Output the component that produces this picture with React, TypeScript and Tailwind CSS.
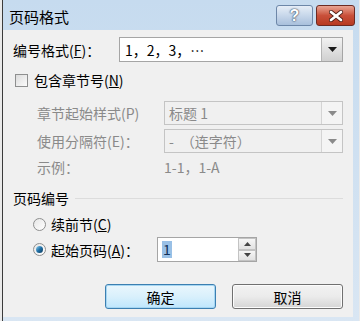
import React from 'react';

const FONT = "font-['Noto_Sans_CJK_SC','Noto_Sans',sans-serif]";

function DropArrow({ disabled }: { disabled?: boolean }) {
  return (
    <svg width="9" height="5" viewBox="0 0 9 5">
      <path d="M0 0 L9 0 L4.5 5 Z" fill={disabled ? '#8a8a8a' : '#1a1a1a'} />
    </svg>
  );
}

function Combo({ value, disabled }: { value: string; disabled?: boolean }) {
  return (
    <div
      className={`flex h-[24px] flex-1 items-stretch border ${
        disabled ? 'border-[#c4c4c4] bg-[#f0f0f0] text-[#8a8a8a]' : 'border-[#a5a5a5] bg-white text-black'
      }`}
    >
      <div className="flex flex-1 items-center pl-[4px]">{value}</div>
      <div
        className={`flex w-[21px] items-center justify-center border-l ${
          disabled ? 'border-[#d4d4d4] bg-[#f4f4f4]' : 'border-[#b5b5b5] bg-gradient-to-b from-[#f2f2f2] to-[#d6d6d6]'
        }`}
      >
        <DropArrow disabled={disabled} />
      </div>
    </div>
  );
}

function Radio({ checked }: { checked?: boolean }) {
  return (
    <div className="flex h-[13px] w-[13px] items-center justify-center rounded-full border border-[#8e8f8f] bg-gradient-to-br from-[#e6e6e6] to-[#ffffff]">
      {checked && (
        <div className="h-[7px] w-[7px] rounded-full bg-gradient-to-br from-[#8ad4f5] via-[#1f6fa5] to-[#0d3a5c]" />
      )}
    </div>
  );
}

export default function App() {
  return (
    <div className={`h-[321px] w-[360px] bg-[#eaeaea] ${FONT}`}>
      <div className="ml-[2px] flex h-[321px] w-[357px] flex-col border-l border-[#3b3b3b] bg-gradient-to-b from-[#c6dbef] to-[#d9e6f3]">
        {/* Title bar */}
        <div className="flex h-[30px] items-start">
          <div className="ml-[6px] mt-[6px] text-[15px] leading-[22px] text-black">页码格式</div>
          <div className="ml-auto mt-[5px] flex gap-[3px] pr-[4px]">
            <div className="flex h-[21px] w-[37px] items-center justify-center rounded-[3px] border border-[#6d87a8] bg-gradient-to-b from-[#e6eef7] via-[#c7d7ea] to-[#a9c0dc]">
              <span className="font-['Liberation_Sans',sans-serif] text-[16px] font-bold leading-none text-white [text-shadow:0_0_1px_#2b3d55,0_0_2px_#2b3d55]">?</span>
            </div>
            <div className="flex h-[21px] w-[39px] items-center justify-center rounded-[3px] border border-[#6c2a22] bg-gradient-to-b from-[#e8a493] via-[#c9503a] to-[#b73a22]">
              <svg width="14" height="12" viewBox="0 0 14 12">
                <path d="M2 2 L12 10 M12 2 L2 10" stroke="#4b1a12" strokeWidth="4.2" strokeLinecap="round" />
                <path d="M2 2 L12 10 M12 2 L2 10" stroke="#ffffff" strokeWidth="2.8" strokeLinecap="round" />
              </svg>
            </div>
          </div>
        </div>

        {/* Client area */}
        <div className="mr-[6px] flex h-[287px] flex-col bg-[#f0f0f0] px-[10px] text-[14px] leading-[20px] text-black">
          <div className="mt-[7px] flex h-[25px] items-center">
            <span className="w-[106px]">编号格式(<u>F</u>)：</span>
            <div className="flex h-[25px] flex-1 items-stretch border border-[#a5a5a5] bg-white">
              <div className="flex flex-1 items-center pl-[5px]">1，2，3，⋯</div>
              <div className="flex w-[21px] items-center justify-center border-l border-[#b5b5b5] bg-gradient-to-b from-[#f2f2f2] to-[#d0d0d0]">
                <DropArrow />
              </div>
            </div>
          </div>

          <div className="mt-[11px] flex h-[14px] items-center">
            <div className="ml-[2px] h-[13px] w-[13px] border border-[#8e8f8f] bg-gradient-to-br from-[#dcdcdc] to-[#fbfbfb]" />
            <span className="ml-[6px]">包含章节号(<u>N</u>)</span>
          </div>

          <div className="mt-[14px] flex h-[24px] items-center text-[#8a8a8a]">
            <span className="ml-[24px] w-[127px]">章节起始样式(P)</span>
            <Combo value="标题 1" disabled />
          </div>

          <div className="mt-[4px] flex h-[24px] items-center text-[#8a8a8a]">
            <span className="ml-[24px] w-[127px]">使用分隔符(E)：</span>
            <Combo value="-　（连字符）" disabled />
          </div>

          <div className="mt-[4px] flex h-[20px] items-center text-[#8a8a8a]">
            <span className="ml-[24px] w-[127px]">示例：</span>
            <span>1-1，1-A</span>
          </div>

          <div className="mt-[11px] flex h-[20px] items-center">
            <span>页码编号</span>
            <div className="ml-[6px] h-px flex-1 bg-[#dcdcdc]" />
          </div>

          <div className="mt-[6px] flex h-[20px] items-center">
            <div className="ml-[20px]">
              <Radio />
            </div>
            <span className="ml-[5px]">续前节(<u>C</u>)</span>
          </div>

          <div className="mt-[3px] flex h-[25px] items-center">
            <div className="ml-[20px]">
              <Radio checked />
            </div>
            <span className="ml-[5px] w-[106px]">起始页码(<u>A</u>)：</span>
            <div className="flex h-[25px] w-[100px] items-stretch border border-[#a5a5a5] bg-white">
              <div className="flex flex-1 items-center pl-[4px]">
                <span className="bg-[#99c0e6] px-px leading-[17px] text-[#10305a]">1</span>
              </div>
              <div className="flex w-[18px] flex-col">
                <div className="flex flex-1 items-center justify-center border border-[#c3c3c3] bg-gradient-to-b from-[#f6f6f6] to-[#e2e2e2]">
                  <svg width="7" height="4" viewBox="0 0 7 4"><path d="M0 4 L7 4 L3.5 0 Z" fill="#444" /></svg>
                </div>
                <div className="flex flex-1 items-center justify-center border border-[#c3c3c3] bg-gradient-to-b from-[#f6f6f6] to-[#e2e2e2]">
                  <svg width="7" height="4" viewBox="0 0 7 4"><path d="M0 0 L7 0 L3.5 4 Z" fill="#444" /></svg>
                </div>
              </div>
            </div>
          </div>

          <div className="mt-[22px] flex justify-end gap-[16px]">
            <button className="h-[25px] w-[111px] rounded-[3px] border border-[#3c7fb1] bg-gradient-to-b from-[#eaf6fd] via-[#d9f0fc] to-[#bee6fd] text-[14px] shadow-[inset_0_0_0_1px_#a6d6f2]">
              确定
            </button>
            <button className="h-[25px] w-[111px] rounded-[3px] border border-[#707070] bg-gradient-to-b from-[#f2f2f2] via-[#ebebeb] to-[#d5d5d5] text-[14px] shadow-[inset_0_0_0_1px_#fcfcfc]">
              取消
            </button>
          </div>
        </div>
        <div className="h-[4px]" />
      </div>
    </div>
  );
}
